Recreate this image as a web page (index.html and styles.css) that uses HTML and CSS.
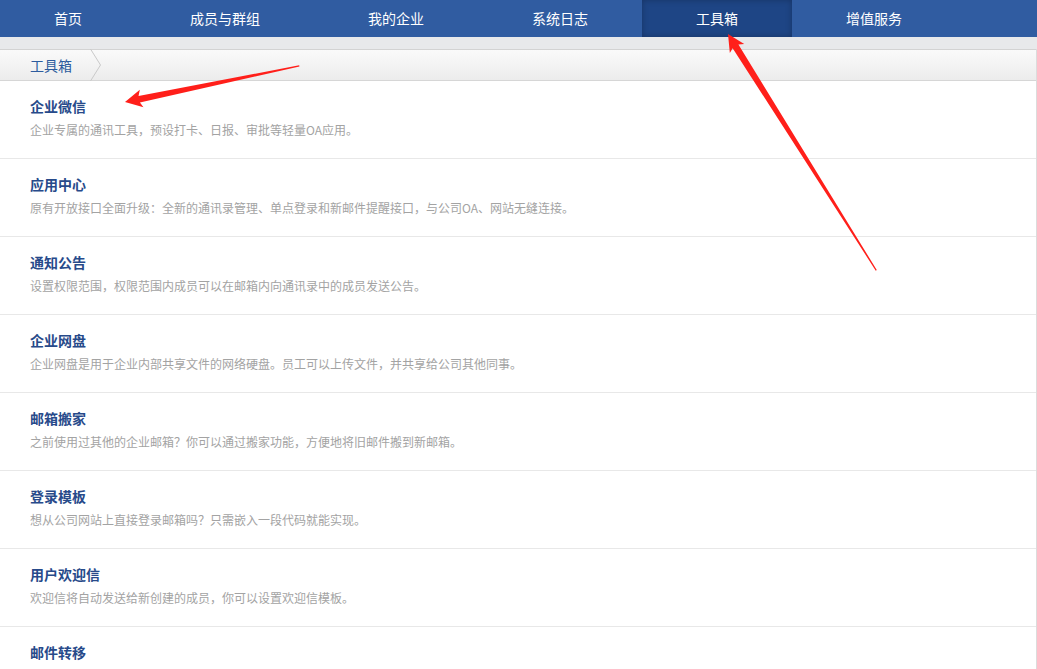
FILE: index.html
```html
<!DOCTYPE html>
<html lang="zh-CN">
<head>
<meta charset="utf-8">
<title>工具箱</title>
<link rel="stylesheet" href="styles.css">
</head>
<body>
<div class="nav">
  <a class="nav-item">首页</a>
  <a class="nav-item">成员与群组</a>
  <a class="nav-item">我的企业</a>
  <a class="nav-item">系统日志</a>
  <a class="nav-item active">工具箱</a>
  <a class="nav-item">增值服务</a>
</div>
<div class="band"></div>
<div class="main">
  <div class="crumb">
    <span class="crumb-item">工具箱</span>
    <svg class="crumb-sep" width="12" height="32" viewBox="0 0 12 32"><polyline points="0.5,0 10.5,16 0.5,32" fill="none" stroke="#c9c9c9" stroke-width="1"/></svg>
  </div>
  <ul class="list">
    <li class="row"><div class="title">企业微信</div><div class="desc">企业专属的通讯工具，预设打卡、日报、审批等轻量OA应用。</div></li>
    <li class="row"><div class="title">应用中心</div><div class="desc">原有开放接口全面升级：全新的通讯录管理、单点登录和新邮件提醒接口，与公司OA、网站无缝连接。</div></li>
    <li class="row"><div class="title">通知公告</div><div class="desc">设置权限范围，权限范围内成员可以在邮箱内向通讯录中的成员发送公告。</div></li>
    <li class="row"><div class="title">企业网盘</div><div class="desc">企业网盘是用于企业内部共享文件的网络硬盘。员工可以上传文件，并共享给公司其他同事。</div></li>
    <li class="row"><div class="title">邮箱搬家</div><div class="desc">之前使用过其他的企业邮箱？你可以通过搬家功能，方便地将旧邮件搬到新邮箱。</div></li>
    <li class="row"><div class="title">登录模板</div><div class="desc">想从公司网站上直接登录邮箱吗？只需嵌入一段代码就能实现。</div></li>
    <li class="row"><div class="title">用户欢迎信</div><div class="desc">欢迎信将自动发送给新创建的成员，你可以设置欢迎信模板。</div></li>
    <li class="row"><div class="title">邮件转移</div></li>
  </ul>
</div>
<svg class="annot" width="1037" height="669" viewBox="0 0 1037 669">
  <g transform="translate(125 102) rotate(-11.7)">
    <polygon points="0,0 17,-9 14.5,-3.2 178,-0.6 178,0.6 14.5,3.6 17,9" fill="#ff1f1a"/>
  </g>
  <g transform="translate(728 34) rotate(57.9)">
    <polygon points="0,0 17,-8.5 14.5,-3.2 279,-0.6 279,0.6 14.5,3.6 17,8.5" fill="#ff1f1a"/>
  </g>
</svg>
</body>
</html>
```
FILE: styles.css
```css
* { box-sizing: border-box; }
html, body { margin: 0; padding: 0; background: #fff; }
body {
  font-family: "Noto Sans CJK SC", "Liberation Sans", sans-serif;
  position: relative;
  width: 1037px;
  height: 669px;
  overflow: hidden;
}
.nav {
  display: flex;
  height: 37px;
  background: #305ca1;
}
.nav-item {
  display: block;
  padding: 0 54px;
  height: 37px;
  line-height: 37px;
  font-size: 14px;
  color: #fff;
  white-space: nowrap;
}
.nav-item.active {
  background: #1e4585;
  box-shadow: inset 0 0 6px rgba(0, 0, 0, 0.25);
}
.band {
  height: 12px;
  background: #e8e9eb;
}
.main {
  border-right: 1px solid #dcdcdc;
}
.crumb {
  display: flex;
  align-items: stretch;
  height: 32px;
  border-top: 1px solid #d3d3d3;
  border-bottom: 1px solid #d6d6d6;
  background: linear-gradient(#fafafa, #ececec);
}
.crumb-item {
  padding: 0 18px 0 30px;
  line-height: 30px;
  font-size: 14px;
  color: #2d5c9e;
}
.crumb-sep {
  display: block;
  margin-top: -1px;
}
.list {
  list-style: none;
  margin: 0;
  padding: 0;
}
.row {
  padding: 15px 30px 18px;
  border-bottom: 1px solid #e8e8e8;
}
.title {
  font-size: 14px;
  line-height: 20px;
  font-weight: bold;
  color: #274a8a;
}
.desc {
  margin-top: 4px;
  font-size: 12px;
  line-height: 20px;
  color: #a3a3a3;
}
.annot {
  position: absolute;
  left: 0;
  top: 0;
  pointer-events: none;
}
```
